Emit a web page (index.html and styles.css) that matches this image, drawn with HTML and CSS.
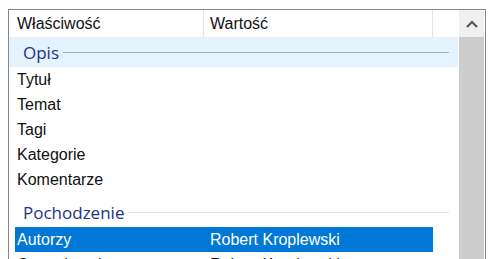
FILE: index.html
```html
<!DOCTYPE html>
<html lang="pl">
<head>
  <meta charset="UTF-8" />
  <title>Właściwości</title>
  <link rel="stylesheet" href="styles.css">
</head>
<body>
  <div class="props">
    <div class="list">
      <div class="head">
        <div class="hc c1">Właściwość</div>
        <div class="hc c2">Wartość</div>
        <div class="hc c3"></div>
      </div>

      <div class="group active"><span>Opis</span><i class="rule"></i></div>
      <div class="row"><div class="c1">Tytuł</div><div class="c2"></div></div>
      <div class="row"><div class="c1">Temat</div><div class="c2"></div></div>
      <div class="row"><div class="c1">Tagi</div><div class="c2"></div></div>
      <div class="row"><div class="c1">Kategorie</div><div class="c2"></div></div>
      <div class="row"><div class="c1">Komentarze</div><div class="c2"></div></div>

      <div class="group spaced"><span>Pochodzenie</span><i class="rule"></i></div>
      <div class="row selected"><div class="c1">Autorzy</div><div class="c2">Robert Kroplewski</div></div>
      <div class="row"><div class="c1">Ostatni zapis</div><div class="c2">Robert Kroplewski</div></div>
    </div>

    <div class="scroll">
      <div class="arrow">
        <svg width="12" height="8" viewBox="0 0 12 8">
          <path d="M1 7 L6 2 L11 7" fill="none" stroke="#555" stroke-width="2.2"/>
        </svg>
      </div>
      <div class="thumb"></div>
    </div>
  </div>
</body>
</html>
```

FILE: styles.css
```css
html, body {
  margin: 0;
  height: 259px;
  overflow: hidden;
  background: #fff;
}
body {
  font-family: 'Liberation Sans', Arial, sans-serif;
  font-size: 16px;
  color: #111;
}
.props {
  margin: 9px 0 0 8px;
  width: 476px;
  height: 270px;
  border: 1px solid #828790;
  display: flex;
}
.list {
  width: 449px;
}
.head {
  display: flex;
  height: 27px;
}
.hc {
  line-height: 27px;
  box-sizing: border-box;
}
.head .c1 {
  width: 195px;
  padding-left: 8px;
  border-right: 1px solid #e5e5e5;
}
.head .c2 {
  width: 229px;
  padding-left: 6px;
  border-right: 1px solid #e5e5e5;
}
.head .c3 {
  flex: 1;
}
.group {
  display: flex;
  align-items: center;
  height: 30px;
  padding-left: 14px;
  padding-right: 9px;
  font-family: 'Open Sans', sans-serif;
  font-size: 17px;
  color: #1e3287;
}
.group.spaced {
  margin-top: 5px;
}
.group.active {
  background: #e5f3ff;
}
.rule {
  flex: 1;
  height: 1px;
  margin-left: 4px;
  background: #e3e3ea;
}
.group.active .rule {
  background: #a3b2c6;
}
.row {
  display: flex;
  height: 25px;
  line-height: 25px;
  margin-left: 6px;
  width: 418px;
}
.row .c1 {
  width: 188px;
  padding-left: 2px;
  box-sizing: border-box;
}
.row .c2 {
  flex: 1;
  padding-left: 7px;
}
.row.selected {
  background: #0078d7;
  color: #fff;
}
.scroll {
  width: 27px;
  padding: 0 1px;
  box-sizing: border-box;
  display: flex;
  flex-direction: column;
}
.arrow {
  height: 27px;
  background: #f0f0f0;
  display: flex;
  align-items: center;
  justify-content: center;
}
.thumb {
  flex: 1;
  background: #cdcdcd;
}
```
